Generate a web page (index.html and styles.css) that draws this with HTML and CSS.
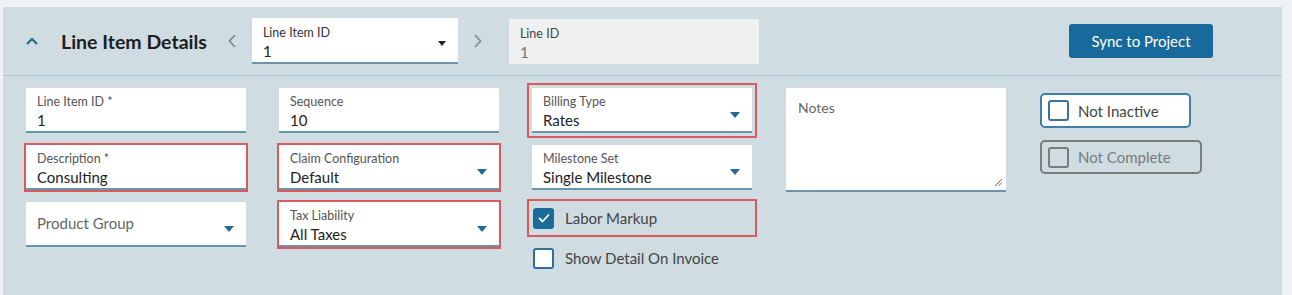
FILE: index.html
```html
<!DOCTYPE html>
<html lang="en">
<head>
    <meta charset="UTF-8">
    <title>Line Item Details</title>
    <link rel="stylesheet" href="styles.css">
</head>
<body>
    <div class="panel">
        <div class="panel-header">
            <svg class="collapse" width="14" height="10" viewBox="0 0 14 10">
                <path d="M2 8 L7 3 L12 8" fill="none" stroke="#2c6e92" stroke-width="2.4"/>
            </svg>
            <h2>Line Item Details</h2>
            <svg class="pager prev" width="8" height="14" viewBox="0 0 8 14">
                <path d="M7 1 L1.5 7 L7 13" fill="none" stroke="#7f8c92" stroke-width="1.8"/>
            </svg>
            <div class="field select header-select">
                <label>Line Item ID</label>
                <div class="value">1</div>
                <span class="caret dark"></span>
            </div>
            <svg class="pager next" width="8" height="14" viewBox="0 0 8 14">
                <path d="M1 1 L6.5 7 L1 13" fill="none" stroke="#7f8c92" stroke-width="1.8"/>
            </svg>
            <div class="field readonly">
                <label>Line ID</label>
                <div class="value">1</div>
            </div>
            <button class="sync-btn">Sync to Project</button>
        </div>

        <div class="panel-body">
            <div class="col">
                <div class="field">
                    <label>Line Item ID *</label>
                    <div class="value">1</div>
                </div>
                <div class="field flagged">
                    <label>Description *</label>
                    <div class="value">Consulting</div>
                </div>
                <div class="field select">
                    <div class="placeholder">Product Group</div>
                    <span class="caret"></span>
                </div>
            </div>

            <div class="col">
                <div class="field">
                    <label>Sequence</label>
                    <div class="value">10</div>
                </div>
                <div class="field select flagged">
                    <label>Claim Configuration</label>
                    <div class="value">Default</div>
                    <span class="caret"></span>
                </div>
                <div class="field select flagged">
                    <label>Tax Liability</label>
                    <div class="value">All Taxes</div>
                    <span class="caret"></span>
                </div>
            </div>

            <div class="col">
                <div class="field select flagged wide-flag">
                    <label>Billing Type</label>
                    <div class="value">Rates</div>
                    <span class="caret"></span>
                </div>
                <div class="field select">
                    <label>Milestone Set</label>
                    <div class="value">Single Milestone</div>
                    <span class="caret"></span>
                </div>
                <div class="check-row flagged wide-flag">
                    <span class="box checked">
                        <svg width="14" height="12" viewBox="0 0 14 12">
                            <path d="M2 6 L5.5 9.5 L12 2.5" fill="none" stroke="#fff" stroke-width="1.8"/>
                        </svg>
                    </span>
                    <span>Labor Markup</span>
                </div>
                <div class="check-row">
                    <span class="box"></span>
                    <span>Show Detail On Invoice</span>
                </div>
            </div>

            <div class="col">
                <div class="notes">
                    <label>Notes</label>
                    <svg class="grip" width="9" height="9" viewBox="0 0 9 9">
                        <path d="M1 8 L8 1 M4.5 8 L8 4.5" stroke="#666" stroke-width="1"/>
                    </svg>
                </div>
            </div>

            <div class="col toggles">
                <div class="toggle active">
                    <span class="box"></span>
                    <span>Not Inactive</span>
                </div>
                <div class="toggle muted">
                    <span class="box"></span>
                    <span>Not Complete</span>
                </div>
            </div>
        </div>
    </div>
</body>
</html>
```

FILE: styles.css
```css
body {
    margin: 0;
    padding: 7px 0 0 3px;
    background-color: #eef2f5;
    font-family: Lato, "Open Sans", sans-serif;
    color: #222;
}

.panel {
    width: 1279px;
    height: 300px;
    background-color: #cfdde3;
}

.panel-header {
    display: flex;
    align-items: center;
    height: 68px;
    padding: 0 69px 0 22px;
    border-bottom: 1px solid #a9c7d2;
}

.collapse {
    margin-right: 22px;
}

.panel-header h2 {
    margin: 0;
    font-size: 19.5px;
    font-weight: 700;
    color: #1e1e1e;
}

.pager {
    flex-shrink: 0;
}

.pager.prev {
    margin: 0 16px 0 21px;
}

.pager.next {
    margin: 0 27px 0 16px;
}

.field {
    position: relative;
    box-sizing: border-box;
    width: 220px;
    height: 45px;
    padding: 7px 11px 0;
    background-color: #fff;
    border-bottom: 2px solid #6b95ad;
}

.field label {
    display: block;
    font-size: 12.5px;
    line-height: 14px;
    margin-bottom: 2px;
    color: #555;
}

.field .value {
    font-size: 15px;
    line-height: 19px;
}

.field .placeholder {
    font-size: 15px;
    line-height: 19px;
    margin-top: 5px;
    color: #666;
}

.header-select {
    width: 206px;
    height: 46px;
    padding-top: 8px;
}

.header-select label {
    color: #333;
}

.readonly {
    width: 250px;
    padding-top: 8px;
    background-color: #eef0f1;
    border-bottom: none;
}

.readonly label {
    color: #444;
}

.readonly .value {
    color: #777;
}

.caret {
    position: absolute;
    right: 12px;
    top: 24px;
    width: 0;
    height: 0;
    border-left: 5px solid transparent;
    border-right: 5px solid transparent;
    border-top: 6px solid #1f6a96;
}

.caret.dark {
    right: 12px;
    top: 23px;
    border-left-width: 4.5px;
    border-right-width: 4.5px;
    border-top: 5px solid #222;
}

.sync-btn {
    margin-left: auto;
    width: 144px;
    height: 34px;
    border: none;
    border-radius: 3px;
    background-color: #176a9b;
    color: #fff;
    font-family: inherit;
    font-size: 15px;
}

.panel-body {
    display: grid;
    grid-template-columns: 253px 253px 254px 254px auto;
    padding: 12px 0 0 23px;
}

.col {
    display: flex;
    flex-direction: column;
    gap: 12px;
}

.flagged {
    outline: 2px solid #d9595e;
    outline-offset: 0;
}

.wide-flag {
    outline-offset: 3px;
}

.check-row {
    display: flex;
    align-items: center;
    gap: 11px;
    width: 220px;
    box-sizing: border-box;
    height: 28px;
    padding-left: 1px;
    font-size: 15px;
    color: #444;
}

.check-row.flagged {
    margin-top: 2px;
}

.box {
    box-sizing: border-box;
    display: flex;
    align-items: center;
    justify-content: center;
    width: 21px;
    height: 21px;
    border: 2px solid #2f6f98;
    border-radius: 3px;
    background-color: #fff;
}

.box.checked {
    background-color: #1a6a9a;
    border-color: #1a6a9a;
}

.notes {
    position: relative;
    box-sizing: border-box;
    width: 220px;
    height: 104px;
    padding: 9px 12px;
    background-color: #fff;
    border-bottom: 2px solid #6b95ad;
}

.notes label {
    font-size: 14px;
    color: #666;
}

.grip {
    position: absolute;
    right: 3px;
    bottom: 3px;
}

.toggles {
    padding-top: 5px;
}

.toggle {
    box-sizing: border-box;
    display: flex;
    align-items: center;
    gap: 9px;
    height: 35px;
    padding-left: 6px;
    border: 2px solid #3f7fa8;
    border-radius: 5px;
    font-size: 15px;
    color: #444;
}

.toggle.active {
    width: 151px;
    background-color: #fff;
}

.toggle.active .box {
    border-color: #3b7398;
}

.toggle.muted {
    width: 162px;
    height: 34px;
    border-color: #7b7b7b;
    color: #7a7a7a;
}

.toggle.muted .box {
    background-color: transparent;
    border-color: #7b7b7b;
}
```
